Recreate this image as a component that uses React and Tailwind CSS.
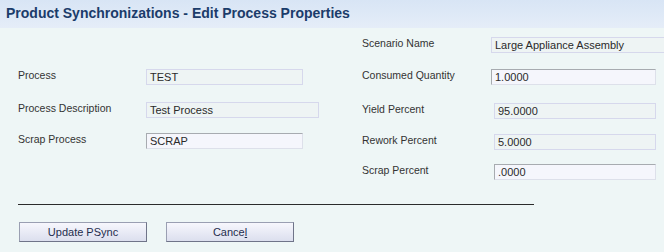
import React from "react";

const font = { fontFamily: '"Liberation Sans", Arial, sans-serif' };

const Field = ({ label, value, editable, inputClass, className = "" }) => (
  <div className={`flex items-center h-[16px] ${className}`}>
    <span className="w-[128px] shrink-0 mb-[3px] text-[10.5px] text-[#333]">{label}</span>
    <div
      className={`h-[16px] flex items-center pl-[3px] text-[11px] text-[#2a2a2a] whitespace-nowrap overflow-hidden ${
        editable
          ? "bg-[#f5f6fc] border border-t-[#a7abb0] border-l-[#a7abb0] border-r-[#dde0ea] border-b-[#dde0ea]"
          : "bg-[#eef4f4] border border-[#d6d8ec]"
      } ${inputClass}`}
    >
      {value}
    </div>
  </div>
);

const Btn = ({ children }) => (
  <button className="w-[128px] h-[20px] text-[11px] text-[#1f2d4d] border border-[#9a9fb2] border-r-[#6f7489] border-b-[#6f7489] bg-gradient-to-b from-[#f7f7fd] to-[#dcdfee]">
    {children}
  </button>
);

export default function App() {
  return (
    <div className="w-[664px] h-[252px] bg-[#eef6f6] overflow-hidden" style={font}>
      <div className="h-[28px] bg-gradient-to-b from-[#d8e5f5] to-[#e5edf8] flex items-center pl-[6px]">
        <h1 className="text-[14px] font-bold text-[#1b3c6a] mb-[2px]">
          Product Synchronizations - Edit Process Properties
        </h1>
      </div>
      <div className="flex pl-[18px]">
        <div className="w-[344px] shrink-0 flex flex-col pt-[41px]">
          <Field label="Process" value="TEST" inputClass="w-[157px]" />
          <Field label="Process Description" value="Test Process" inputClass="w-[173px]" className="mt-[17px]" />
          <Field label="Scrap Process" value="SCRAP" editable inputClass="w-[157px]" className="mt-[15px]" />
        </div>
        <div className="flex flex-col pt-[9px]">
          <Field label="Scenario Name" value="Large Appliance Assembly" inputClass="w-[200px]" className="[&>span]:w-[129px]" />
          <Field label="Consumed Quantity" value="1.0000" editable inputClass="w-[165px]" className="mt-[16px] [&>span]:w-[129px]" />
          <Field label="Yield Percent" value="95.0000" inputClass="w-[162px]" className="mt-[18px] [&>span]:w-[132px]" />
          <Field label="Rework Percent" value="5.0000" inputClass="w-[162px]" className="mt-[15px] [&>span]:w-[132px]" />
          <Field label="Scrap Percent" value=".0000" editable inputClass="w-[162px]" className="mt-[14px] [&>span]:w-[132px]" />
        </div>
      </div>
      <div className="ml-[18px] mt-[24px] w-[516px] h-px bg-[#2b2b2b]" />
      <div className="flex gap-[19px] ml-[19px] mt-[17px]">
        <Btn>Update PSync</Btn>
        <Btn>
          Cance<span className="underline">l</span>
        </Btn>
      </div>
    </div>
  );
}
